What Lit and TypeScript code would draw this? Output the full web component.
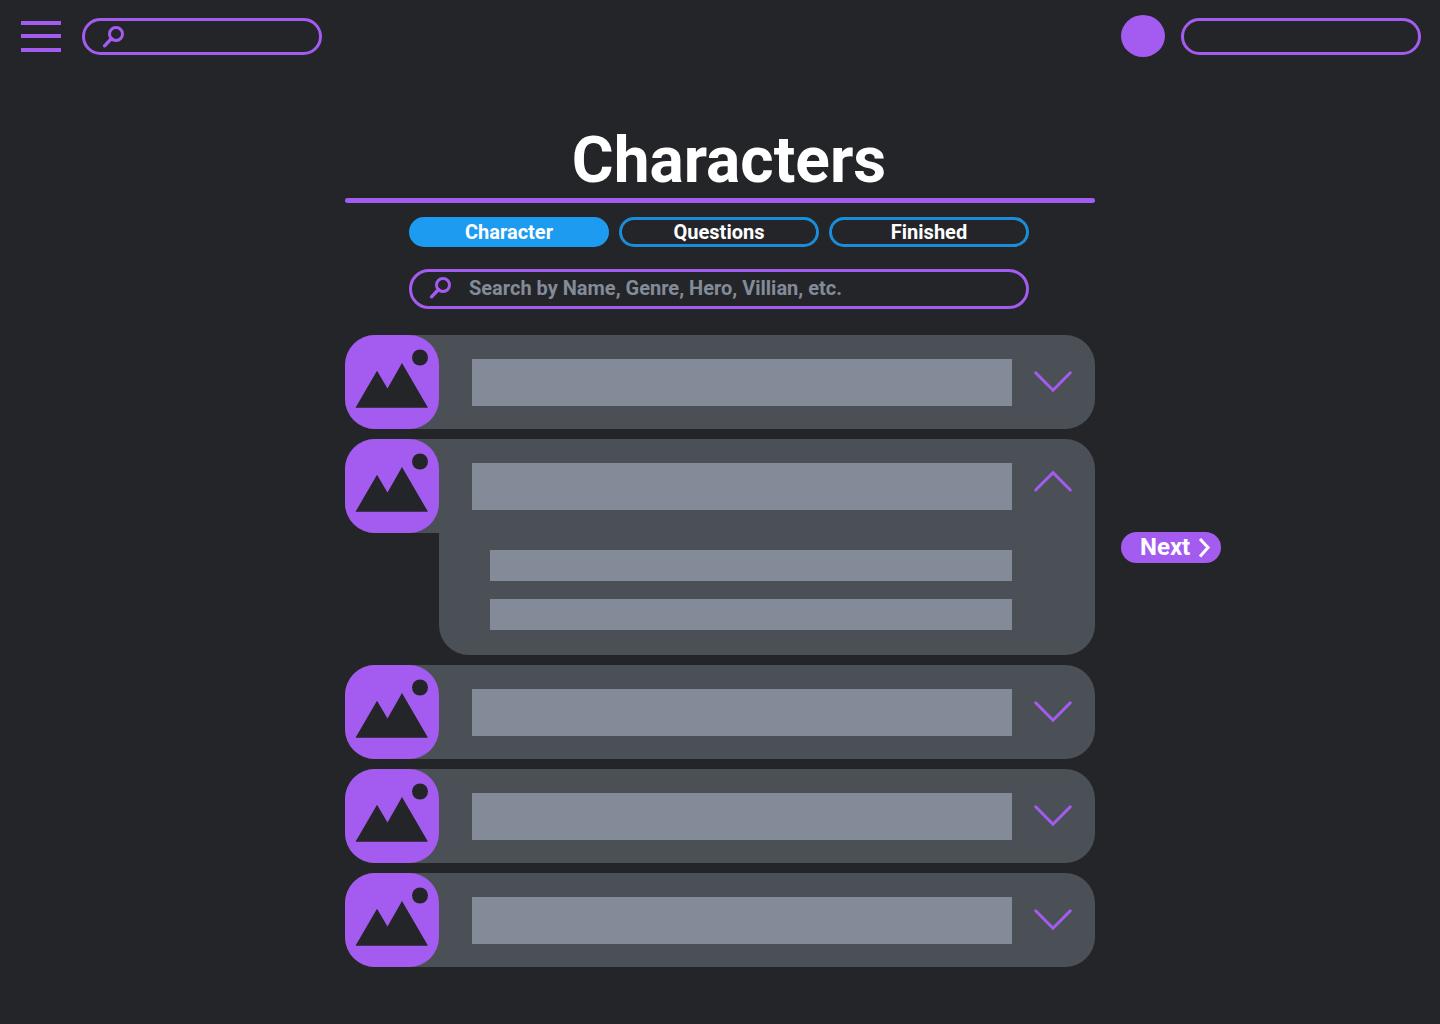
import { LitElement, html, css, svg, nothing } from "lit";
import { customElement, property, state } from "lit/decorators.js";
import { classMap } from "lit/directives/class-map.js";

const searchIcon = html`
  <svg class="search-icon" width="24" height="23" viewBox="0 0 24 23" fill="none" stroke="currentColor" stroke-width="3" aria-hidden="true">
    <circle cx="14" cy="9" r="6.5" />
    <path d="M9.5 13.5 L2.6 20.8" stroke-width="3.4" stroke-linecap="round" />
  </svg>
`;

const chevron = (open: boolean) => svg`
  <path d=${open ? "M2.7 27 L20 9.6 L37.3 27" : "M2.7 13.8 L20 31.2 L37.3 13.8"} />
`;

@customElement("character-card")
class CharacterCard extends LitElement {
  @property({ type: Boolean }) open = false;

  static styles = css`
    :host {
      display: block;
    }
    .row {
      display: flex;
      align-items: center;
      height: 94px;
      border-radius: 30px;
      background: #4b5057;
    }
    .row.open {
      border-bottom-right-radius: 0;
    }
    .thumb {
      display: block;
      flex: none;
      border-radius: 30px;
      background: #a45bf0;
    }
    .name {
      flex: 1;
      height: 47px;
      margin-left: 33px;
      background: #838b99;
    }
    .toggle {
      display: block;
      margin: 0 22px 0 21px;
      padding: 0;
      border: 0;
      background: none;
      color: #a45bf0;
      cursor: pointer;
    }
    .toggle svg {
      display: block;
    }
    .details {
      display: flex;
      flex-direction: column;
      gap: 18px;
      margin-left: 94px;
      padding: 17px 83px 25px 51px;
      border-radius: 0 0 30px 30px;
      background: #4b5057;
    }
    .line {
      height: 31px;
      background: #838b99;
    }
  `;

  private toggle() {
    this.open = !this.open;
  }

  render() {
    return html`
      <div class=${classMap({ row: true, open: this.open })}>
        <svg class="thumb" width="94" height="94" viewBox="0 0 94 94" fill="#242529" aria-hidden="true">
          <path d="M10.5 72.8 L32 35.8 L42.5 53.5 L57 28 L83 72.8 Z" />
          <circle cx="75" cy="22.5" r="8" />
        </svg>
        <div class="name"></div>
        <button class="toggle" aria-label="Details" aria-expanded=${this.open ? "true" : "false"} @click=${this.toggle}>
          <svg width="40" height="47" viewBox="0 0 40 47" fill="none" stroke="currentColor" stroke-width="3" stroke-linecap="round">
            ${chevron(this.open)}
          </svg>
        </button>
      </div>
      ${this.open
        ? html`<div class="details"><div class="line"></div><div class="line"></div></div>`
        : nothing}
    `;
  }
}

@customElement("app-root")
class AppRoot extends LitElement {
  @state() private step = "Character";

  private steps = ["Character", "Questions", "Finished"];
  private cards = [false, true, false, false, false];

  static styles = css`
    :host {
      display: block;
      min-height: 100vh;
      background: #242529;
      color: #ffffff;
      font-family: Roboto, "Liberation Sans", sans-serif;
    }
    *,
    *::before {
      box-sizing: border-box;
    }
    button,
    input {
      font: inherit;
      color: inherit;
    }
    .topbar {
      display: flex;
      align-items: center;
      padding: 15px 19px 14px 21px;
      min-height: 72px;
    }
    .menu {
      display: block;
      margin-right: 21px;
      padding: 0;
      border: 0;
      background: none;
      color: #a45bf0;
      cursor: pointer;
    }
    .menu svg {
      display: block;
    }
    .pill {
      display: flex;
      align-items: center;
      border: 3px solid #a45bf0;
      border-radius: 20px;
      color: #a45bf0;
    }
    .pill.small {
      width: 240px;
      height: 37px;
      padding: 0 17px;
    }
    .pill.large {
      height: 40px;
      padding: 0 17px 3px;
    }
    .search-icon {
      flex: none;
    }
    .field {
      flex: 1;
      min-width: 0;
      margin-left: 16px;
      padding: 0;
      border: 0;
      outline: 0;
      background: none;
      color: #ffffff;
      font-size: 20px;
      font-weight: 700;
      line-height: 24px;
    }
    .field::placeholder {
      color: #838b99;
      opacity: 1;
    }
    .avatar {
      align-self: flex-start;
      width: 44px;
      height: 42px;
      margin: 0 16px 0 auto;
      padding: 0;
      border: 0;
      border-radius: 50%;
      background: #a45bf0;
      cursor: pointer;
    }
    .page {
      display: grid;
      grid-template-columns: 1fr minmax(0, 750px) 1fr;
      align-items: center;
      column-gap: 26px;
      padding: 56px 0;
    }
    .content {
      grid-column: 2;
    }
    .title {
      margin: 0;
      padding: 0 0 4px 18px;
      font-size: 64px;
      font-weight: 700;
      line-height: 66px;
      text-align: center;
    }
    .rule {
      height: 5px;
      border-radius: 3px;
      background: #a45bf0;
    }
    .controls {
      display: flex;
      flex-direction: column;
      gap: 22px;
      padding: 14px 66px 26px 64px;
    }
    .steps {
      display: flex;
      gap: 10px;
    }
    .step {
      flex: 1;
      height: 30px;
      padding: 0;
      border: 3px solid #1a8cd8;
      border-radius: 15px;
      background: none;
      font-size: 20px;
      font-weight: 700;
      line-height: 24px;
      cursor: pointer;
    }
    .step.current {
      border-color: #1d9bf0;
      background: #1d9bf0;
    }
    .list {
      display: flex;
      flex-direction: column;
      gap: 10px;
    }
    .next {
      display: flex;
      align-items: center;
      justify-self: start;
      gap: 8px;
      height: 31px;
      padding: 0 10px 0 19px;
      border: 0;
      border-radius: 16px;
      background: #a45bf0;
      font-size: 24px;
      font-weight: 700;
      line-height: 31px;
      cursor: pointer;
    }
  `;

  render() {
    return html`
      <header class="topbar">
        <button class="menu" aria-label="Menu">
          <svg width="40" height="31" viewBox="0 0 40 31" fill="currentColor">
            <path d="M0 0h40v4H0z M0 13h40v4H0z M0 27h40v4H0z" />
          </svg>
        </button>
        <label class="pill small">
          ${searchIcon}
          <input class="field" type="search" aria-label="Search" />
        </label>
        <button class="avatar" aria-label="Account"></button>
        <div class="pill small"></div>
      </header>
      <main class="page">
        <section class="content">
          <h1 class="title">Characters</h1>
          <div class="rule"></div>
          <div class="controls">
            <nav class="steps">
              ${this.steps.map(
                (name) => html`
                  <button
                    class=${classMap({ step: true, current: name === this.step })}
                    @click=${() => (this.step = name)}
                  >${name}</button>
                `
              )}
            </nav>
            <label class="pill large">
              ${searchIcon}
              <input
                class="field"
                type="search"
                aria-label="Search characters"
                placeholder="Search by Name, Genre, Hero, Villian, etc."
              />
            </label>
          </div>
          <div class="list">
            ${this.cards.map((open) => html`<character-card ?open=${open}></character-card>`)}
          </div>
        </section>
        <button class="next">
          Next
          <svg width="13" height="20" viewBox="0 0 13 20" fill="none" stroke="currentColor" stroke-width="3" aria-hidden="true">
            <path d="M2 1 L10 9.5 L2 18.5" />
          </svg>
        </button>
      </main>
    `;
  }
}
